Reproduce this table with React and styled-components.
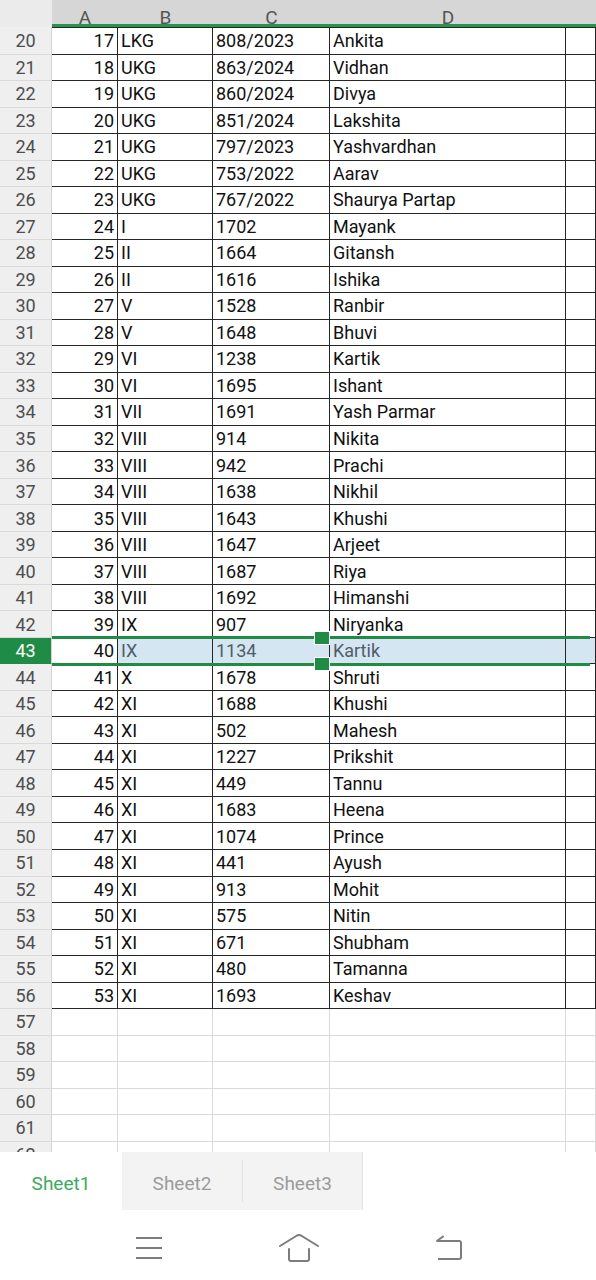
import React from "react";
import styled, { createGlobalStyle } from "styled-components";

const COLS = "52px 66px 95px 117px 236px 30px";
const GREEN = "#1f8c45";

const rows = [
  ["17", "LKG", "808/2023", "Ankita"],
  ["18", "UKG", "863/2024", "Vidhan"],
  ["19", "UKG", "860/2024", "Divya"],
  ["20", "UKG", "851/2024", "Lakshita"],
  ["21", "UKG", "797/2023", "Yashvardhan"],
  ["22", "UKG", "753/2022", "Aarav"],
  ["23", "UKG", "767/2022", "Shaurya Partap"],
  ["24", "I", "1702", "Mayank"],
  ["25", "II", "1664", "Gitansh"],
  ["26", "II", "1616", "Ishika"],
  ["27", "V", "1528", "Ranbir"],
  ["28", "V", "1648", "Bhuvi"],
  ["29", "VI", "1238", "Kartik"],
  ["30", "VI", "1695", "Ishant"],
  ["31", "VII", "1691", "Yash Parmar"],
  ["32", "VIII", "914", "Nikita"],
  ["33", "VIII", "942", "Prachi"],
  ["34", "VIII", "1638", "Nikhil"],
  ["35", "VIII", "1643", "Khushi"],
  ["36", "VIII", "1647", "Arjeet"],
  ["37", "VIII", "1687", "Riya"],
  ["38", "VIII", "1692", "Himanshi"],
  ["39", "IX", "907", "Niryanka"],
  ["40", "IX", "1134", "Kartik"],
  ["41", "X", "1678", "Shruti"],
  ["42", "XI", "1688", "Khushi"],
  ["43", "XI", "502", "Mahesh"],
  ["44", "XI", "1227", "Prikshit"],
  ["45", "XI", "449", "Tannu"],
  ["46", "XI", "1683", "Heena"],
  ["47", "XI", "1074", "Prince"],
  ["48", "XI", "441", "Ayush"],
  ["49", "XI", "913", "Mohit"],
  ["50", "XI", "575", "Nitin"],
  ["51", "XI", "671", "Shubham"],
  ["52", "XI", "480", "Tamanna"],
  ["53", "XI", "1693", "Keshav"],
];

const ACTIVE_ROW = 43;

function App() {
  const lines = [];
  for (let n = 20; n <= 62; n++) {
    const data = rows[n - 20];
    lines.push({ n, data: data || ["", "", "", ""], filled: !!data });
  }

  return (
    <Screen>
      <GlobalStyle />
      <Sheet>
        <HeaderRow>
          <Corner />
          {["A", "B", "C", "D", ""].map((l, i) => (
            <ColHead key={i}>{l}</ColHead>
          ))}
        </HeaderRow>
        {lines.map(({ n, data, filled }) => {
          const active = n === ACTIVE_ROW;
          return (
            <Row key={n} $first={n === 20}>
              <RowHead $active={active}>{n}</RowHead>
              <Cell $dark={filled} $first={n === 20} $num>
                {data[0]}
              </Cell>
              <Cell $dark={filled} $first={n === 20} $sel={active}>
                {data[1]}
              </Cell>
              <Cell $dark={filled} $first={n === 20} $sel={active}>
                {data[2]}
              </Cell>
              <Cell $dark={filled} $first={n === 20} $sel={active}>
                {data[3]}
              </Cell>
              <Cell $dark={filled} $first={n === 20} $sel={active} />
            </Row>
          );
        })}
        <Selection>
          <Handle />
          <Handle $bottom />
        </Selection>
      </Sheet>
      <TabBar>
        <Tab $w={122} $active>
          Sheet1
        </Tab>
        <Tab $w={120}>Sheet2</Tab>
        <Divider />
        <Tab $w={120} $edge>
          Sheet3
        </Tab>
      </TabBar>
      <NavBar>
        <svg width="28" height="24" viewBox="0 0 28 24">
          <g stroke="#7c7c7c" strokeWidth="2" fill="none">
            <path d="M1 2 H27 M1 12 H27 M1 22 H27" />
          </g>
        </svg>
        <svg width="40" height="30" viewBox="0 0 40 30">
          <g
            stroke="#7c7c7c"
            strokeWidth="2"
            fill="none"
            strokeLinecap="round"
            strokeLinejoin="round"
          >
            <path d="M1 13 L18 2.5 Q20 1.5 22 2.5 L39 13" />
            <path d="M10 16 V26 Q10 28 12 28 H28 Q30 28 30 26 V16" />
          </g>
        </svg>
        <svg width="28" height="26" viewBox="0 0 28 26">
          <g
            stroke="#7c7c7c"
            strokeWidth="2"
            fill="none"
            strokeLinejoin="round"
          >
            <path d="M2 6 L8 1.5" strokeLinecap="round" />
            <path d="M2 6 H24 Q26 6 26 8 V22 Q26 24 24 24 H3" />
          </g>
        </svg>
      </NavBar>
    </Screen>
  );
}

export default App;

const GlobalStyle = createGlobalStyle`
  html, body {
    margin: 0;
    padding: 0;
    background: #fff;
  }
  body {
    font-family: Roboto, "Noto Sans", Arial, sans-serif;
  }
`;

const Screen = styled.div`
  width: 596px;
  height: 1280px;
  display: flex;
  flex-direction: column;
  overflow: hidden;
  background: #fff;
`;

const Sheet = styled.div`
  position: relative;
  height: 1152px;
  flex: none;
  overflow: hidden;
`;

const HeaderRow = styled.div`
  display: grid;
  grid-template-columns: ${COLS};
  height: 27px;
`;

const Corner = styled.div`
  background: #ebebeb;
`;

const ColHead = styled.div`
  height: 17px;
  padding-top: 7px;
  background: #d6d6d6;
  border-bottom: 3px solid #27944c;
  overflow: hidden;
  text-align: center;
  font-size: 19px;
  line-height: 22px;
  color: #555;
`;

const Row = styled.div`
  display: grid;
  grid-template-columns: ${COLS};
  height: ${(p) => (p.$first ? "27.53px" : "26.53px")};
`;

const RowHead = styled.div`
  box-sizing: border-box;
  display: flex;
  align-items: center;
  justify-content: center;
  background: ${(p) => (p.$active ? GREEN : "#efefef")};
  color: ${(p) => (p.$active ? "#fff" : "#4d4d4d")};
  border-bottom: 1px solid ${(p) => (p.$active ? GREEN : "#dadada")};
  border-right: 1px solid #d4d4d4;
  font-size: 18px;
`;

const Cell = styled.div`
  box-sizing: border-box;
  display: flex;
  align-items: center;
  justify-content: ${(p) => (p.$num ? "flex-end" : "flex-start")};
  padding: 0 3px;
  background: ${(p) => (p.$sel ? "#d5e5f2" : "#fff")};
  color: ${(p) => (p.$sel ? "#4e5d6b" : "#111")};
  border-top: ${(p) => (p.$first ? "1px solid #262626" : "none")};
  border-bottom: 1px solid ${(p) => (p.$dark ? "#262626" : "#dadada")};
  border-right: 1px solid ${(p) => (p.$dark ? "#262626" : "#dadada")};
  font-size: 18px;
  white-space: nowrap;
  overflow: hidden;
`;

const Selection = styled.div`
  position: absolute;
  left: 52px;
  top: 636px;
  width: 538px;
  height: 24px;
  border-top: 3px solid ${GREEN};
  border-bottom: 3px solid ${GREEN};
  pointer-events: none;
`;

const Handle = styled.div`
  position: absolute;
  left: 263px;
  top: ${(p) => (p.$bottom ? "19px" : "-7px")};
  width: 14px;
  height: 12px;
  background: ${GREEN};
  box-shadow: 0 0 0 1px #fff;
`;

const TabBar = styled.div`
  display: flex;
  height: 58px;
  flex: none;
  background: #fff;
`;

const Tab = styled.div`
  box-sizing: border-box;
  width: ${(p) => p.$w}px;
  padding-top: 5px;
  display: flex;
  align-items: center;
  justify-content: center;
  background: ${(p) => (p.$active ? "#fff" : "#f3f3f3")};
  color: ${(p) => (p.$active ? "#3daa5e" : "#9b9b9b")};
  border-right: ${(p) => (p.$edge ? "1px solid #e2e2e2" : "none")};
  font-size: 19px;
`;

const Divider = styled.div`
  width: 1px;
  box-sizing: border-box;
  background: #e2e2e2;
  border-top: 8px solid #f3f3f3;
  border-bottom: 8px solid #f3f3f3;
`;

const NavBar = styled.div`
  height: 64px;
  padding: 6px 0 0 135px;
  display: flex;
  align-items: center;
  gap: 116px;
  background: #fff;
`;
